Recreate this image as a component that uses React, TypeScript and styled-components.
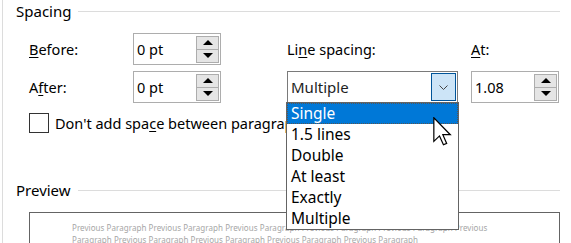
import styled, { createGlobalStyle } from 'styled-components';

const GlobalStyle = createGlobalStyle`
  html, body {
    margin: 0;
    padding: 0;
    background: #fff;
  }
  body {
    font-family: "Noto Sans", "Open Sans", sans-serif;
    font-size: 14.5px;
    color: #000;
  }
`;

// CSS
const Page = styled.div`
  position: relative;
  width: 571px;
  height: 243px;
  overflow: hidden;
  background: #fff;
`;

const Dialog = styled.div`
  margin-left: 2px;
  height: 100%;
  border-left: solid 1px #dcdcdc;
  padding-left: 13px;
  box-sizing: border-box;
`;

const GroupTitle = styled.div<{ $top?: number }>`
  display: flex;
  align-items: center;
  height: 22px;
  margin-top: ${(p) => p.$top ?? 0}px;
  width: 544px;
  font-size: 15px;

  &::after {
    content: '';
    flex: 1;
    height: 1px;
    margin-left: 7px;
    background: #dcdcdc;
  }
`;

const FieldGrid = styled.div`
  display: grid;
  grid-template-columns: 104px 88px 66px 171px 13px 88px;
  grid-template-rows: 32px 32px;
  row-gap: 6px;
  margin-top: 11px;
  padding-left: 13px;
  align-items: center;
`;

const Label = styled.div<{ $col: number }>`
  grid-column: ${(p) => p.$col};
  white-space: nowrap;
`;

const U = styled.span`
  text-decoration: underline;
  text-underline-offset: 2px;
`;

const SpinBox = styled.div<{ $col: number }>`
  grid-column: ${(p) => p.$col};
  height: 32px;
  box-sizing: border-box;
  display: flex;
  align-items: center;
  border: solid 1px #adadad;
  padding: 0 1px 0 3px;
  background: #fff;
`;

const SpinValue = styled.div`
  flex: 1;
`;

const SpinButtons = styled.div`
  display: flex;
  flex-direction: column;
  width: 23px;
`;

const SpinButton = styled.div`
  height: 12px;
  display: flex;
  align-items: center;
  justify-content: center;
  background: #e5e5e5;
  border: solid 1px #adadad;
  & + & {
    border-top: none;
  }
`;

const Arrow = styled.div<{ $down?: boolean }>`
  width: 0;
  height: 0;
  border-left: 5px solid transparent;
  border-right: 5px solid transparent;
  ${(p) => (p.$down ? 'border-top: 5px solid #000;' : 'border-bottom: 5px solid #000;')}
`;

const Combo = styled.div`
  grid-column: 4;
  position: relative;
  height: 32px;
  box-sizing: border-box;
  display: flex;
  align-items: center;
  border: solid 1px #7a7a7a;
  padding-left: 3px;
  background: #fff;
`;

const ComboValue = styled.div`
  flex: 1;
  font-size: 15px;
  color: #1e1e1e;
`;

const ComboButton = styled.div`
  width: 25px;
  height: 28px;
  margin-right: 1px;
  display: flex;
  align-items: center;
  justify-content: center;
  background: #cce4f7;
  border: solid 1px #005499;
  box-sizing: border-box;
`;

const List = styled.div`
  position: absolute;
  top: 30px;
  left: -2px;
  width: 171px;
  border: solid 1px #646464;
  background: #fff;
  z-index: 2;
`;

const ListItem = styled.div<{ $active?: boolean }>`
  height: 21px;
  line-height: 20px;
  padding-left: 4px;
  box-sizing: border-box;
  font-size: 15.5px;
  white-space: nowrap;
  color: ${(p) => (p.$active ? '#fff' : '#000')};
  background: ${(p) => (p.$active ? '#0078d7' : 'transparent')};
  outline: ${(p) => (p.$active ? '1px dotted #555' : 'none')};
  outline-offset: -1px;
`;

const CheckRow = styled.div`
  display: flex;
  align-items: center;
  gap: 6px;
  margin-top: 10px;
  padding-left: 13px;
  white-space: nowrap;
`;

const CheckBox = styled.div`
  width: 20px;
  height: 20px;
  box-sizing: border-box;
  border: solid 1px #333;
  background: #fff;
`;

const PreviewBox = styled.div`
  margin: 11px 0 0 13px;
  width: 531px;
  height: 80px;
  box-sizing: border-box;
  border: solid 1px #646464;
  padding: 9px 0 0 42px;
`;

const PreviewLine = styled.div`
  font-size: 8px;
  letter-spacing: 0.05px;
  line-height: 12px;
  color: #a6a6a6;
  white-space: nowrap;
`;

const Cursor = styled.svg`
  position: absolute;
  left: 433px;
  top: 117px;
  z-index: 3;
`;

const options = ['Single', '1.5 lines', 'Double', 'At least', 'Exactly', 'Multiple'];

const Spinner = () => (
  <SpinButtons>
    <SpinButton>
      <Arrow />
    </SpinButton>
    <SpinButton>
      <Arrow $down />
    </SpinButton>
  </SpinButtons>
);

const App = () => {
  return (
    <Page>
      <GlobalStyle />
      <Dialog>
        <GroupTitle>Spacing</GroupTitle>
        <FieldGrid>
          <Label $col={1}>
            <U>B</U>efore:
          </Label>
          <SpinBox $col={2}>
            <SpinValue>0 pt</SpinValue>
            <Spinner />
          </SpinBox>
          <Label $col={4}>
            Li<U>n</U>e spacing:
          </Label>
          <Label $col={6}>
            <U>A</U>t:
          </Label>

          <Label $col={1}>
            A<U>f</U>ter:
          </Label>
          <SpinBox $col={2}>
            <SpinValue>0 pt</SpinValue>
            <Spinner />
          </SpinBox>
          <Combo>
            <ComboValue>Multiple</ComboValue>
            <ComboButton>
              <svg width="9" height="5" viewBox="0 0 9 5">
                <path d="M0.5 0.5 L4.5 4.5 L8.5 0.5" fill="none" stroke="#444" strokeWidth="1" />
              </svg>
            </ComboButton>
            <List>
              {options.map((o, i) => (
                <ListItem key={o} $active={i === 0}>
                  {o}
                </ListItem>
              ))}
            </List>
          </Combo>
          <SpinBox $col={6}>
            <SpinValue>1.08</SpinValue>
            <Spinner />
          </SpinBox>
        </FieldGrid>
        <CheckRow>
          <CheckBox />
          <span>
            Don't add spa<U>c</U>e between paragraphs of the same style
          </span>
        </CheckRow>
        <GroupTitle $top={46}>Preview</GroupTitle>
        <PreviewBox>
          <PreviewLine>
            Previous Paragraph Previous Paragraph Previous Paragraph Previous Paragraph Previous Paragraph Previous
          </PreviewLine>
          <PreviewLine>
            Paragraph Previous Paragraph Previous Paragraph Previous Paragraph Previous Paragraph
          </PreviewLine>
        </PreviewBox>
      </Dialog>
      <Cursor width="20" height="29" viewBox="0 0 13 19">
        <path
          d="M0.5 0.5 L0.5 16 L4.2 12.4 L6.8 18.2 L8.9 17.3 L6.4 11.6 L11.3 11.6 Z"
          fill="#fff"
          stroke="#000"
          strokeWidth="0.8"
          strokeLinejoin="miter"
        />
      </Cursor>
    </Page>
  );
};

export default App;
